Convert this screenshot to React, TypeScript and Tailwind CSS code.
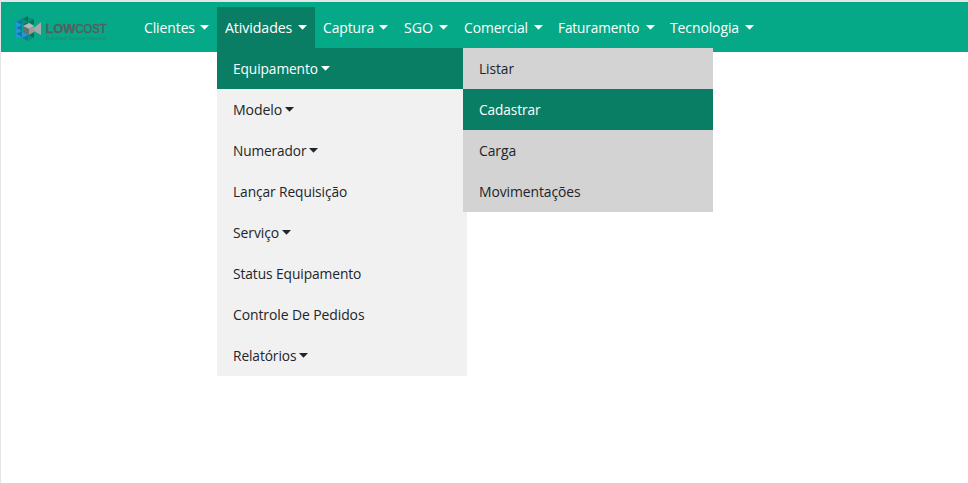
const font = "font-['Open_Sans','Noto_Sans',sans-serif]";

function Caret({ className = '' }: { className?: string }) {
  return (
    <svg className={`shrink-0 ${className}`} width="9" height="5" viewBox="0 0 9 5" fill="currentColor">
      <path d="M0 0h9L4.5 4.8z" />
    </svg>
  );
}

function Logo() {
  return (
    <svg className="block" width="98" height="28" viewBox="14 14 98 28">
      <path d="M28 16v6l-6-3z" fill="#087259" />
      <path d="M28 22v5l-6-3z" fill="#087259" />
      <path d="M34 19v6l-6-3z" fill="#087259" />
      <path d="M28 17l6 2-6 3z" fill="#079578" />
      <path d="M22 19v6l-6-3z" fill="#1477a9" />
      <path d="M16 22l6 3-6 3z" fill="#2199d8" />
      <path d="M22 25v6l-6-3z" fill="#1477a9" />
      <path d="M16 28l6 3-6 3z" fill="#2199d8" />
      <path d="M22 31v6l-6-3z" fill="#1477a9" />
      <path d="M16 34l6 3-6 1z" fill="#2199d8" />
      <path d="M22 19l6 3-6 3z" fill="#0b8d91" />
      <path d="M22 32l6 3-6 3z" fill="#2199d8" />
      <path d="M28 35v6l-6-3z" fill="#1477a9" />
      <path d="M34 32v6l-6-3z" fill="#087259" />
      <path d="M28 35l6 3-6 3z" fill="#079578" />
      <path d="M34 28l7-6v13l-7-4z" fill="#a4aaa8" />
      <path d="M23 26l6-3 5 3-5 3z" fill="#b4b7b5" />
      <path d="M23 26l6 3v6l-6-3z" fill="#68716f" />
      <path d="M29 29l5-3v6l-5 3z" fill="#969d9a" />
      <g fill="#535f60" fontFamily="Liberation Sans, Arial, sans-serif">
        <text x="45.500" y="33" fontSize="13" fontWeight="700" stroke="#535f60" strokeWidth=".3" textLength="30" lengthAdjust="spacingAndGlyphs">LOW</text>
        <text x="75.500" y="33" fontSize="13" stroke="#535f60" strokeWidth=".5" textLength="31" lengthAdjust="spacingAndGlyphs">COST</text>
        <text x="46" y="39.500" fontSize="4.500" opacity=".55" textLength="61" lengthAdjust="spacingAndGlyphs">Document Solution Integrator</text>
      </g>
    </svg>
  );
}

const nav = [
  { label: 'Clientes', box: 'w-[81px]', scale: 'scale-x-[0.93]' },
  { label: 'Atividades', box: 'w-[98px] bg-[#0a7e64]', scale: 'scale-x-[0.945]' },
  { label: 'Captura', box: 'w-[81px]', scale: 'scale-x-[0.925]' },
  { label: 'SGO', box: 'w-[60px]', scale: 'scale-x-[0.945]' },
  { label: 'Comercial', box: 'w-[94.500px]', scale: 'scale-x-[0.925]' },
  { label: 'Faturamento', box: 'w-[112px]', scale: 'scale-x-[0.905]' },
  { label: 'Tecnologia', box: 'w-[99px]', scale: 'scale-x-[0.93]' },
];

type Item = { label: string; caret?: boolean; active?: boolean; text: string };

const menu: Item[] = [
  { label: 'Equipamento', caret: true, active: true, text: 'w-[85px] scale-x-[0.915]' },
  { label: 'Modelo', caret: true, text: 'w-[49px] scale-x-[0.94]' },
  { label: 'Numerador', caret: true, text: 'w-[73.500px] scale-x-[0.91]' },
  { label: 'Lançar Requisição', text: 'scale-x-[0.917]' },
  { label: 'Serviço', caret: true, text: 'w-[46px] scale-x-[0.93]' },
  { label: 'Status Equipamento', text: 'scale-x-[0.919]' },
  { label: 'Controle De Pedidos', text: 'scale-x-[0.93]' },
  { label: 'Relatórios', caret: true, text: 'w-[63px] scale-x-[0.915]' },
];

const submenu: Item[] = [
  { label: 'Listar', text: 'scale-x-[0.92]' },
  { label: 'Cadastrar', active: true, text: 'scale-x-[0.91]' },
  { label: 'Carga', text: 'scale-x-[0.93]' },
  { label: 'Movimentações', text: 'scale-x-[0.927]' },
];

function MenuRow({ item }: { item: Item }) {
  return (
    <li className={`flex h-[41px] items-center pl-[15.500px] ${item.active ? 'bg-[#0a7e64] text-white' : 'text-[#212529]'}`}>
      <span className={`origin-left whitespace-nowrap ${item.text}`}>{item.label}</span>
      {item.caret && <Caret className="ml-[3px]" />}
    </li>
  );
}

export default function App() {
  return (
    <div className={`h-[483px] w-[968px] overflow-hidden border-t-2 border-l border-[#e5e5e5] bg-white text-[15px] tracking-[-0.1px] ${font}`}>
      <header className="flex h-[50px] bg-[#06a987] pt-[5px] text-white">
        <div className="ml-[13px] w-[122px] pt-[7px]"><Logo /></div>
        <nav className="flex">
          {nav.map((item) => (
            <div key={item.label} className={`relative flex h-[41px] items-center justify-between pr-2 pl-[7.500px] ${item.box}`}>
              <span className={`w-0 flex-1 origin-left whitespace-nowrap ${item.scale}`}>{item.label}</span>
              <Caret />
              {item.label === 'Atividades' && (
                <div className="absolute top-[41px] left-0 z-10 w-[250px]">
                  <ul className="bg-[#f1f1f1]">
                    {menu.map((m) => <MenuRow key={m.label} item={m} />)}
                  </ul>
                  <ul className="absolute top-0 left-[246px] w-[250px] bg-[#d3d3d3]">
                    {submenu.map((m) => <MenuRow key={m.label} item={m} />)}
                  </ul>
                </div>
              )}
            </div>
          ))}
        </nav>
      </header>
    </div>
  );
}
